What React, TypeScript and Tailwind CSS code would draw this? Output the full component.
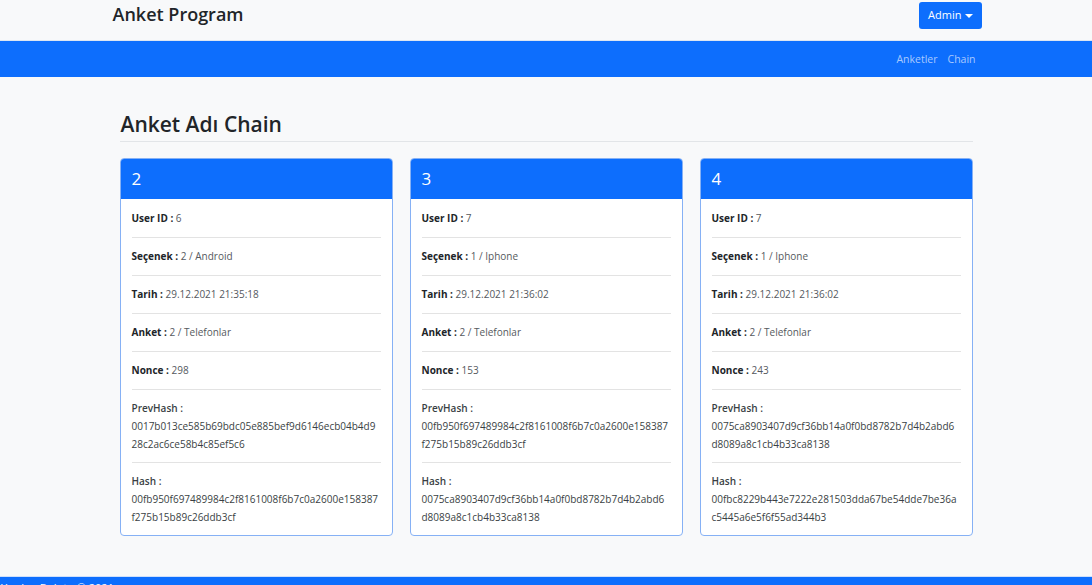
import React from "react";

interface Block {
  id: number;
  userId: number;
  secenek: string;
  tarih: string;
  anket: string;
  nonce: number;
  prevHash: string[];
  hash: string[];
}

const blocks: Block[] = [
  {
    id: 2,
    userId: 6,
    secenek: "2 / Android",
    tarih: "29.12.2021 21:35:18",
    anket: "2 / Telefonlar",
    nonce: 298,
    prevHash: ["0017b013ce585b69bdc05e885bef9d6146ecb04b4d9", "28c2ac6ce58b4c85ef5c6"],
    hash: ["00fb950f697489984c2f8161008f6b7c0a2600e158387", "f275b15b89c26ddb3cf"],
  },
  {
    id: 3,
    userId: 7,
    secenek: "1 / Iphone",
    tarih: "29.12.2021 21:36:02",
    anket: "2 / Telefonlar",
    nonce: 153,
    prevHash: ["00fb950f697489984c2f8161008f6b7c0a2600e158387", "f275b15b89c26ddb3cf"],
    hash: ["0075ca8903407d9cf36bb14a0f0bd8782b7d4b2abd6", "d8089a8c1cb4b33ca8138"],
  },
  {
    id: 4,
    userId: 7,
    secenek: "1 / Iphone",
    tarih: "29.12.2021 21:36:02",
    anket: "2 / Telefonlar",
    nonce: 243,
    prevHash: ["0075ca8903407d9cf36bb14a0f0bd8782b7d4b2abd6", "d8089a8c1cb4b33ca8138"],
    hash: ["00fbc8229b443e7222e281503dda67be54dde7be36a", "c5445a6e5f6f55ad344b3"],
  },
];

const Row = ({ label, value }: { label: string; value: string | number }) => (
  <div className="py-[10px] leading-[17px] border-b border-[#e3e3e3]">
    <span className="font-bold text-[#212529]">{label} : </span>
    <span className="text-[#55595e]">{value}</span>
  </div>
);

const HashRow = ({ label, lines, last }: { label: string; lines: string[]; last?: boolean }) => (
  <div className={last ? "pt-[10px] pb-[9px]" : "pt-[10px] pb-[9px] border-b border-[#e3e3e3]"}>
    <div className="leading-[17px] font-semibold text-[#3a3f44] mb-[1px]">{label} :</div>
    {lines.map((l) => (
      <div key={l} className="leading-[17.5px] whitespace-nowrap text-[#3a3f44]">
        {l}
      </div>
    ))}
  </div>
);

const App: React.FC = () => {
  return (
    <div className="min-h-[585px] bg-[#f8f9fa] font-['Open_Sans','Noto_Sans',sans-serif] text-[10px] overflow-hidden">
      {/* top navbar */}
      <div className="h-[41px] border-b border-[#dde6f2] bg-[#f8f9fa]">
        <div className="w-[869px] mx-auto flex justify-between items-start pt-[2px]">
          <div className="text-[18px] leading-[24px] font-semibold text-[#212529] ml-[1px]">Anket Program</div>
          <button className="h-[27px] px-[9px] mr-[-1px] rounded-[3px] bg-[#0d6efd] text-white text-[11px] flex items-center gap-[3px]">
            Admin
            <span className="w-0 h-0 border-l-[4px] border-r-[4px] border-t-[4px] border-l-transparent border-r-transparent border-t-white" />
          </button>
        </div>
      </div>

      {/* blue menu */}
      <div className="h-[36px] bg-[#0d6efd]">
        <div className="w-[869px] mx-auto h-full flex justify-end items-center pt-[2px]">
          <a className="px-[5px] text-[10.5px] text-[#a9c9fd]">Anketler</a>
          <a className="pl-[5px] pr-[5px] text-[10.5px] text-[#a9c9fd]">Chain</a>
        </div>
      </div>

      <div className="w-[869px] mx-auto px-[8px]">
        <h2 className="mt-[35px] text-[21px] leading-[25px] font-semibold text-[#212529] pb-[4px] border-b border-[#e2e5e8] pl-[1px]">
          Anket Adı Chain
        </h2>

        <div className="grid grid-cols-3 gap-[17px] mt-[16px] mb-[40px]">
          {blocks.map((b) => (
            <div key={b.id} className="border border-[#86b1f5] rounded-[4px] bg-white overflow-hidden">
              <div className="bg-[#0d6efd] text-white text-[17px] leading-[24px] px-[11px] py-[8px]">{b.id}</div>
              <div className="px-[11px] pt-[1px]">
                <Row label="User ID" value={b.userId} />
                <Row label="Seçenek" value={b.secenek} />
                <Row label="Tarih" value={b.tarih} />
                <Row label="Anket" value={b.anket} />
                <Row label="Nonce" value={b.nonce} />
                <HashRow label="PrevHash" lines={b.prevHash} />
                <HashRow label="Hash" lines={b.hash} last />
              </div>
            </div>
          ))}
        </div>
      </div>

      {/* footer */}
      <div className="bg-[#0d6efd] border-t border-[#cfe0fb] text-white text-[11px] leading-[16px] pt-[3px] pb-[20px] pl-[1px]">
        Yazılım Bulutu © 2021
      </div>
    </div>
  );
};

export default App;
